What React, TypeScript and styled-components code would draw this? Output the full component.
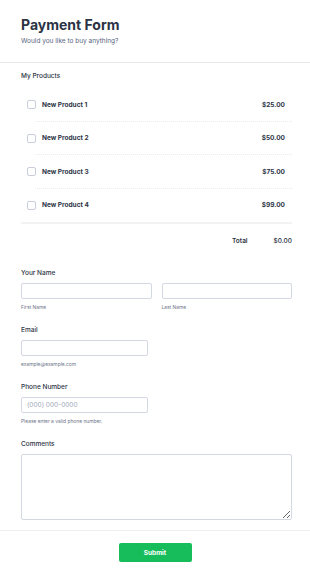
import styled, { createGlobalStyle } from "styled-components";

const GlobalStyle = createGlobalStyle`
  * { box-sizing: border-box; }
  body {
    margin: 0;
    background: #ffffff;
    font-family: Inter, "Noto Sans", sans-serif;
    color: #2c3345;
  }
`;

const Page = styled.main`
  width: 310px;
  min-height: 579px;
  display: flex;
  flex-direction: column;
`;

const Header = styled.header`
  padding: 16px 18px 16px 21px;
  border-bottom: 1px solid #e6e7eb;
`;

const Title = styled.h1`
  margin: 0;
  font-size: 14px;
  line-height: 18px;
  font-weight: 700;
  color: #2c3345;
`;

const Subtitle = styled.p`
  margin: 3px 0 0;
  font-size: 6.5px;
  line-height: 9px;
  color: #57647e;
`;

const Body = styled.section`
  padding: 8px 18px 0 21px;
`;

const Label = styled.div`
  font-size: 6.5px;
  line-height: 10px;
  font-weight: 500;
  color: #2c3345;
`;

const ProductList = styled.ul`
  list-style: none;
  margin: 7px 0 0;
  padding: 0;
  border-bottom: 2px solid #f3f3f5;
`;

const ProductRow = styled.li<{ $last?: boolean }>`
  height: 33.5px;
  display: flex;
  align-items: center;
  padding: 0 7px 0 6px;
  position: relative;

  &::after {
    content: "";
    position: absolute;
    left: 14px;
    right: 0;
    bottom: 0;
    border-bottom: ${(p) => (p.$last ? "none" : "1px dotted #e9ebf0")};
  }
`;

const Checkbox = styled.span`
  width: 9px;
  height: 9px;
  border: 1px solid #c8ceda;
  border-radius: 2px;
  flex-shrink: 0;
`;

const ProductName = styled.span`
  margin-left: 6px;
  flex: 1;
  font-size: 6.5px;
  font-weight: 700;
  color: #2c3345;
`;

const Price = styled.span`
  font-size: 6.5px;
  font-weight: 700;
  color: #2c3345;
`;

const TotalRow = styled.div`
  display: flex;
  justify-content: flex-end;
  align-items: center;
  gap: 26px;
  height: 34px;
  font-size: 6.5px;
  color: #2c3345;
`;

const TotalLabel = styled.span`
  font-weight: 600;
`;

const TotalValue = styled.span`
  font-weight: 500;
`;

const Fields = styled.div`
  display: flex;
  flex-direction: column;
  gap: 14px;
  margin-top: 10px;
`;

const Field = styled.div`
  display: flex;
  flex-direction: column;
  gap: 5px;
`;

const Row = styled.div`
  display: grid;
  grid-template-columns: 1fr 1fr;
  column-gap: 10px;
`;

const Input = styled.input<{ $width?: number }>`
  display: block;
  width: ${(p) => (p.$width ? `${p.$width}px` : "100%")};
  height: 16px;
  margin: 0;
  padding: 0 5px;
  border: 1px solid #d3d8e2;
  border-radius: 2px;
  background: #fff;
  font-family: Inter, sans-serif;
  font-size: 6.5px;
  color: #2c3345;

  &::placeholder {
    color: #a0a8b9;
  }
`;

const SubLabel = styled.div`
  margin-top: 4px;
  font-size: 4.9px;
  line-height: 8px;
  color: #6c7589;
`;

const TextArea = styled.textarea`
  display: block;
  width: 100%;
  height: 66px;
  margin: 0;
  border: 1px solid #d3d8e2;
  border-radius: 2px;
  resize: vertical;
  font-family: Inter, sans-serif;
`;

const Footer = styled.footer`
  margin-top: 10px;
  border-top: 1px solid #eceef2;
  padding-top: 12px;
  display: flex;
  justify-content: center;
`;

const SubmitButton = styled.button`
  width: 73px;
  height: 19px;
  border: none;
  border-radius: 2px;
  background: #18bd5b;
  color: #ffffff;
  font-family: Inter, sans-serif;
  font-size: 6.5px;
  font-weight: 700;
  cursor: pointer;
`;

const products = [
  { name: "New Product 1", price: "$25.00" },
  { name: "New Product 2", price: "$50.00" },
  { name: "New Product 3", price: "$75.00" },
  { name: "New Product 4", price: "$99.00" },
];

export default function App() {
  return (
    <Page>
      <GlobalStyle />
      <Header>
        <Title>Payment Form</Title>
        <Subtitle>Would you like to buy anything?</Subtitle>
      </Header>

      <Body>
        <Label>My Products</Label>
        <ProductList>
          {products.map((p, i) => (
            <ProductRow key={p.name} $last={i === products.length - 1}>
              <Checkbox />
              <ProductName>{p.name}</ProductName>
              <Price>{p.price}</Price>
            </ProductRow>
          ))}
        </ProductList>
        <TotalRow>
          <TotalLabel>Total</TotalLabel>
          <TotalValue>$0.00</TotalValue>
        </TotalRow>

        <Fields>
          <Field>
            <Label>Your Name</Label>
            <Row>
              <div>
                <Input />
                <SubLabel>First Name</SubLabel>
              </div>
              <div>
                <Input />
                <SubLabel>Last Name</SubLabel>
              </div>
            </Row>
          </Field>

          <Field>
            <Label>Email</Label>
            <div>
              <Input $width={127} />
              <SubLabel>example@example.com</SubLabel>
            </div>
          </Field>

          <Field>
            <Label>Phone Number</Label>
            <div>
              <Input $width={127} placeholder="(000) 000-0000" />
              <SubLabel>Please enter a valid phone number.</SubLabel>
            </div>
          </Field>

          <Field>
            <Label>Comments</Label>
            <TextArea />
          </Field>
        </Fields>
      </Body>

      <Footer>
        <SubmitButton>Submit</SubmitButton>
      </Footer>
    </Page>
  );
}
